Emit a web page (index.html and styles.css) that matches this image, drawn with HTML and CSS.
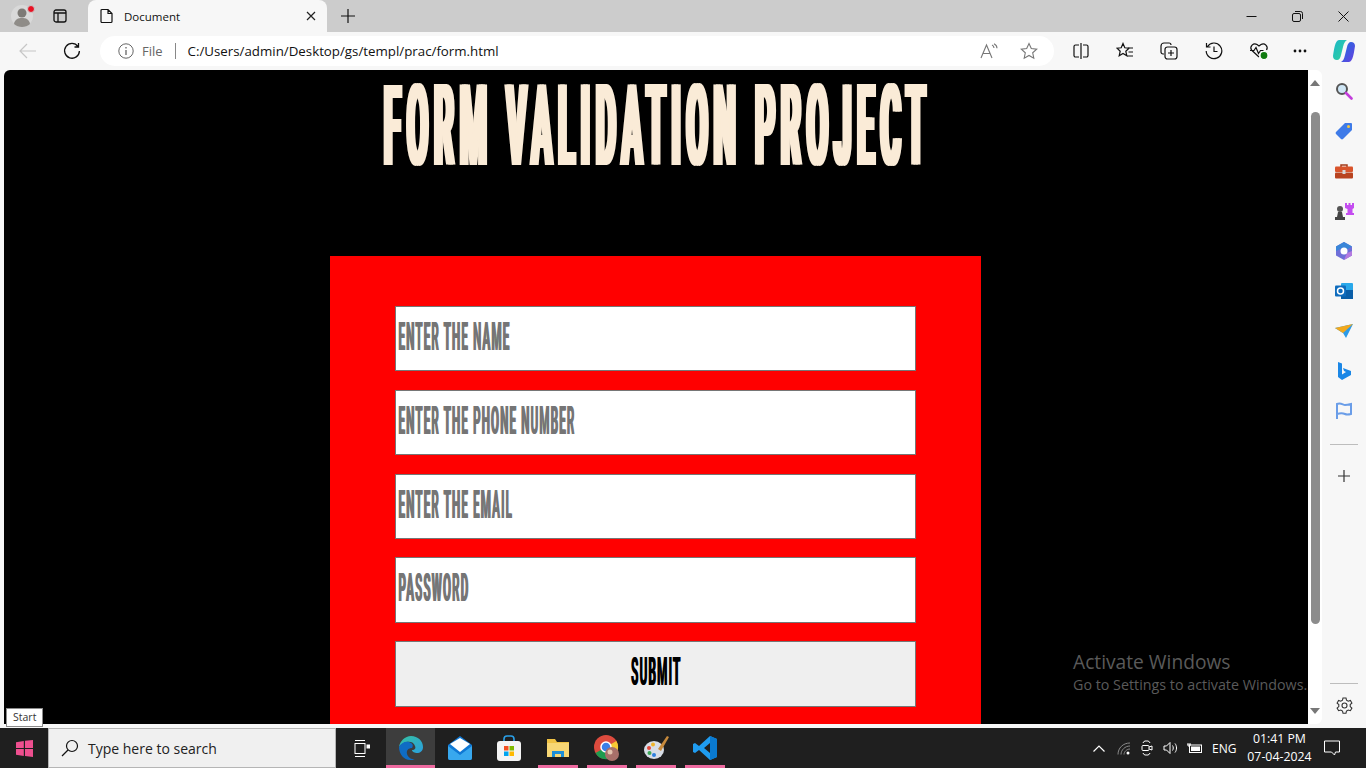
FILE: index.html
```html
<!DOCTYPE html>
<html lang="en">
  <head>
    <meta charset="UTF-8" />
    <meta name="viewport" content="width=device-width, initial-scale=1.0" />
    <title>Document</title>
    <link rel="stylesheet" href="styles.css">
  </head>
  <body>
    <div class="tabbar">
      <div class="profile">
        <svg width="24" height="24" viewBox="0 0 24 24"><circle cx="11" cy="12" r="11" fill="#d9d9d9"/><circle cx="11" cy="9" r="4.5" fill="#7d7a76"/><path d="M3 20c1-5 4-6 8-6s7 1 8 6c-2 2-5 3-8 3s-6-1-8-3z" fill="#8f8c88"/><circle cx="20" cy="5" r="3.5" fill="#e81123" stroke="#ccc"/></svg>
      </div>
      <div class="tabicon">
        <svg width="16" height="16" viewBox="0 0 16 16" fill="none" stroke="#111" stroke-width="1.3"><rect x="2" y="2" width="12" height="12" rx="2"/><path d="M2 5h12M6 5v9"/></svg>
      </div>
      <div class="tab">
        <svg class="tab-doc" width="14" height="16" viewBox="0 0 14 16" fill="none" stroke="#111" stroke-width="1.2"><path d="M2 1.500h6l4 4v8a1 1 0 0 1-1 1H2a1 1 0 0 1-1-1v-11a1 1 0 0 1 1-1zM8 1.500v4h4"/></svg>
        <span class="tab-title">Document</span>
        <svg width="10" height="10" viewBox="0 0 10 10" stroke="#222" stroke-width="1.2"><path d="M1 1l8 8M9 1l-8 8"/></svg>
      </div>
      <div class="newtab">
        <svg width="16" height="16" viewBox="0 0 16 16" stroke="#111" stroke-width="1.2"><path d="M8 1v14M1 8h14"/></svg>
      </div>
      <div class="winctl">
        <button class="winbtn"><svg width="11" height="11" viewBox="0 0 11 11" stroke="#111"><path d="M0.500 5.500h10"/></svg></button>
        <button class="winbtn"><svg width="11" height="11" viewBox="0 0 11 11" fill="none" stroke="#111"><rect x="0.5" y="2.5" width="8" height="8" rx="1.5"/><path d="M3 .5h5.500a2 2 0 0 1 2 2V8"/></svg></button>
        <button class="winbtn"><svg width="11" height="11" viewBox="0 0 11 11" stroke="#111"><path d="M.5.5l10 10M10.500.5l-10 10"/></svg></button>
      </div>
    </div>

    <div class="toolbar">
      <div class="navbtn">
        <svg width="18" height="16" viewBox="0 0 18 16" fill="none" stroke="#c6c6c6" stroke-width="1.2"><path d="M17 8H1M8 1L1 8l7 7"/></svg>
      </div>
      <div class="navbtn">
        <svg width="18" height="18" viewBox="0 0 18 18" fill="none" stroke="#111" stroke-width="1.3"><path d="M15 4.500A7.400 7.400 0 1 0 16.400 9M15.500 1v4h-4"/></svg>
      </div>
      <div class="addressbar">
        <svg class="info" width="16" height="16" viewBox="0 0 16 16" fill="none" stroke="#666"><circle cx="8" cy="8" r="7.2"/><path d="M8 7v5M8 4v1.400" stroke-width="1.3"/></svg>
        <span class="scheme">File</span>
        <span class="addr-sep"></span>
        <span class="url">C:/Users/admin/Desktop/gs/templ/prac/form.html</span>
        <span class="addr-tools">
          <svg width="18" height="16" viewBox="0 0 18 16" fill="none" stroke="#777" stroke-width="1.1"><path d="M1 15L6.500 2 12 15M3 10.500h7M12 2c1.500.7 2 1.800 2 3M14 .8c2 1 3 2.500 3 4.500"/></svg>
          <svg width="18" height="18" viewBox="0 0 18 18" fill="none" stroke="#777" stroke-width="1.1"><path d="M9 1.500l2.300 5 5.400.6-4 3.700 1.100 5.400L9 13.500l-4.800 2.700 1.100-5.400-4-3.700 5.400-.6z"/></svg>
        </span>
      </div>
      <div class="toolicons">
        <svg class="tool" width="16" height="16" viewBox="0 0 16 16" fill="none" stroke="#111" stroke-width="1.2"><path d="M6 2H2.500A1.500 1.500 0 0 0 1 3.500v9A1.500 1.500 0 0 0 2.500 14H6M10 2h3.500A1.500 1.500 0 0 1 15 3.500v9a1.500 1.500 0 0 1-1.500 1.500H10M8 0v16"/></svg>
        <svg class="tool" width="18" height="18" viewBox="0 0 18 18" fill="none" stroke="#111" stroke-width="1.2"><path d="M7 1.500l1.800 4.300 4.200.4-3.200 3 1 4.600L7 11.500l-3.800 2.300 1-4.600-3.200-3 4.200-.4zM12 6h5M12.500 10H17M11 14h6"/></svg>
        <svg class="tool" width="18" height="18" viewBox="0 0 18 18" fill="none" stroke="#111" stroke-width="1.2"><path d="M4 12H3a2 2 0 0 1-2-2V4a3 3 0 0 1 3-3h5a2 2 0 0 1 2 2"/><rect x="5" y="5" width="12" height="12" rx="2.500"/><path d="M11 8v6M8 11h6"/></svg>
        <svg class="tool" width="18" height="18" viewBox="0 0 18 18" fill="none" stroke="#111" stroke-width="1.2"><path d="M2.500 4.500A7.800 7.800 0 1 1 1.200 9M1.500 1v4h4M9 4.500V9.500h3.500"/></svg>
        <svg class="tool tool-health" width="20" height="18" viewBox="0 0 20 18" fill="none" stroke="#111" stroke-width="1.2"><path d="M10 15L2.500 8A4 4 0 0 1 8 2.500l2 1.500 2-1.500A4 4 0 0 1 17.500 8M1 8.500h4l2-3 2.500 6 2-3h3"/><circle cx="15" cy="13.500" r="4" fill="#107c10" stroke="#fff"/></svg>
        <svg class="tool tool-dots" width="14" height="4" viewBox="0 0 14 4" fill="#111"><circle cx="2" cy="2" r="1.400"/><circle cx="7" cy="2" r="1.400"/><circle cx="12" cy="2" r="1.400"/></svg>
        <svg width="24" height="24" viewBox="0 0 24 24"><defs><linearGradient id="cpa" x1="0" y1="0" x2="1" y2="1"><stop offset="0" stop-color="#1bb6c9"/><stop offset="1" stop-color="#34d399"/></linearGradient><linearGradient id="cpb" x1="0" y1="0" x2="1" y2="1"><stop offset="0" stop-color="#1a6fe0"/><stop offset="1" stop-color="#6a3fe0"/></linearGradient></defs><path d="M7 1h8c-2 1-3 3-4 7l-2 8c-.5 3-2 5-4 5-2.500 0-4-1.500-4-4 1-6 2-16 6-16z" fill="url(#cpa)"/><path d="M17 23H9c2-1 3-3 4-7l2-8c.5-3 2-5 4-5 2.500 0 4 1.500 4 4-1 6-2 16-6 16z" fill="url(#cpb)"/></svg>
      </div>
    </div>

    <div class="browser">
      <div class="viewport">
        <h1 class="title"><span class="title-text">FORM VALIDATION PROJECT</span></h1>
        <form class="signup" name="signup" action="">
          <div class="field"><input type="text" name="name" placeholder="ENTER THE NAME" /></div>
          <div class="field"><input type="tel" name="phone" placeholder="ENTER THE PHONE NUMBER" /></div>
          <div class="field"><input type="email" name="email" placeholder="ENTER THE EMAIL" /></div>
          <div class="field"><input type="password" name="password" placeholder="PASSWORD" /></div>
          <button type="button" class="submit"><span class="submit-text">SUBMIT</span></button>
        </form>
        <div class="activate">
          <div class="activate-big">Activate Windows</div>
          <div class="activate-small">Go to Settings to activate Windows.</div>
        </div>
      </div>
      <div class="scrollbar">
        <svg width="10" height="6" viewBox="0 0 10 6" fill="#777"><path d="M5 0l5 6H0z"/></svg>
        <div class="scroll-thumb"></div>
        <svg width="10" height="6" viewBox="0 0 10 6" fill="#777"><path d="M5 6L0 0h10z"/></svg>
      </div>
      <div class="sidebar">
        <div class="side-item"><svg width="18" height="18" viewBox="0 0 18 18" fill="none"><circle cx="7" cy="7" r="5" fill="#cfe6f5" stroke="#555" stroke-width="2"/><path d="M11 11l5.500 5.500" stroke="#c23ddb" stroke-width="2.600" stroke-linecap="round"/></svg></div>
        <div class="side-item"><svg width="18" height="18" viewBox="0 0 18 18"><path d="M10 1h6a1 1 0 0 1 1 1v6l-9 9a1.500 1.500 0 0 1-2 0L1 12a1.500 1.500 0 0 1 0-2z" fill="#3f7be8"/><circle cx="13.500" cy="4.500" r="1.500" fill="#f5c842"/></svg></div>
        <div class="side-item"><svg width="18" height="16" viewBox="0 0 18 16"><path d="M6 4V2h6v2" fill="none" stroke="#a33b1a" stroke-width="1.500"/><rect y="3.500" width="18" height="5.500" rx="1" fill="#d9542b"/><rect y="9.500" width="18" height="6" rx="1" fill="#b8431f"/><rect x="7.500" y="7" width="3" height="4" fill="#d8d8d8"/></svg></div>
        <div class="side-item"><svg width="20" height="18" viewBox="0 0 20 18"><circle cx="6" cy="7" r="3" fill="#555"/><path d="M4 10h4l1 5h2v3H1v-3h2z" fill="#444"/><path d="M11 1h2v2h1.500V1h2v2H18V1h2v5l-1.500 1v4H20v2h-8v-2h1.500V7L11 6z" fill="#c44df0"/></svg></div>
        <div class="side-item"><svg width="18" height="18" viewBox="0 0 18 18"><path d="M9 0l8 4.500v9L9 18l-8-4.500v-9z" fill="#6f6fd8"/><path d="M9 0l8 4.500-5 3L9 5.500 1 9V4.500z" fill="#3a86d8"/><path d="M9 18l8-4.500V9l-5 2z" fill="#b57ae0"/><circle cx="9" cy="9" r="3.500" fill="#fff"/></svg></div>
        <div class="side-item"><svg width="18" height="16" viewBox="0 0 18 16"><rect x="6" width="12" height="15" rx="1" fill="#28a8ea"/><rect x="6" y="7" width="12" height="9" fill="#0a5ea8"/><rect y="2.500" width="11" height="11" rx="1" fill="#0f6cbd"/><circle cx="5.500" cy="8" r="3" fill="none" stroke="#fff" stroke-width="1.500"/></svg></div>
        <div class="side-item"><svg width="18" height="14" viewBox="0 0 18 14"><path d="M0 4l18-4-7 14-3-5z" fill="#2c9be8"/><path d="M0 4l8 5 10-9z" fill="#f2a91e"/></svg></div>
        <div class="side-item"><svg width="14" height="18" viewBox="0 0 14 18"><path d="M1 0l4 1.500v11l4-2.400-2-1-1-3 8 3v4L5 18l-4-3z" fill="#1b87e6"/></svg></div>
        <div class="side-item"><svg width="18" height="18" viewBox="0 0 18 18" fill="none" stroke="#6a9de8" stroke-width="2"><path d="M2 17V2c4-1.500 6 1 8 1s4-.5 6-1v10c-2 .5-4 1-6 0s-5-1-8 0"/></svg></div>
        <div class="side-line"></div>
        <div class="side-item side-plus"><svg width="12" height="12" viewBox="0 0 12 12" stroke="#333" stroke-width="1.200"><path d="M6 0v12M0 6h12"/></svg></div>
        <div class="side-line side-line-low"></div>
        <div class="side-item side-gear"><svg width="17" height="17" viewBox="0 0 17 17" fill="none" stroke="#333" stroke-width="1.100"><circle cx="8.500" cy="8.500" r="2.500"/><path d="M7 1h3l.5 2.200 1.700 1 2.200-.7 1.500 2.600-1.700 1.500v2l1.700 1.500-1.500 2.600-2.200-.7-1.700 1-.5 2.200H7l-.5-2.200-1.700-1-2.200.7L1.100 11.100l1.700-1.500v-2L1.100 6.100l1.500-2.600 2.200.7 1.700-1z"/></svg></div>
      </div>
    </div>

    <div class="tooltip">Start</div>

    <div class="taskbar">
      <div class="start">
        <svg width="17" height="17" viewBox="0 0 17 17" fill="#ee4f8f"><path d="M0 2.200L7.800 1v6.900H0zM9 .8L17 0v7.900H9zM0 9.100h7.800V16L0 14.800zM9 9.100h8V17l-8-1.100z"/></svg>
      </div>
      <div class="search">
        <svg width="18" height="18" viewBox="0 0 18 18" fill="none" stroke="#111" stroke-width="1.200"><circle cx="11" cy="7" r="5.500"/><path d="M7 11l-6 6"/></svg>
        <span class="search-text">Type here to search</span>
      </div>
      <div class="taskicons">
        <div class="task">
          <svg width="16" height="17" viewBox="0 0 16 17" fill="none" stroke="#fff"><path d="M1 .5h10M1 16.500h10"/><rect x="1" y="3.500" width="10" height="10"/><rect x="13" y="5" width="2.500" height="3" fill="#fff"/></svg>
        </div>
        <div class="task task-on">
          <svg width="24" height="24" viewBox="0 0 24 24"><defs><linearGradient id="eda" x1="0" y1="0" x2="1" y2="1"><stop offset="0" stop-color="#35c1a0"/><stop offset="1" stop-color="#2a9fe0"/></linearGradient></defs><path d="M12 0c7 0 12 5 12 11 0 4-3 6-6 6-2 0-5-1-5-3 3 0 4-2 3-4-1-4-5-5-9-4-3 1-6 3-7 5C1 5 6 0 12 0z" fill="url(#eda)"/><path d="M0 11c2-4 6-6 10-5 3 1 5 3 3 6-3 0-6 2-5 6 1 3 4 6 8 5-1 1-3 1-5 1C5 24 0 18 0 11z" fill="#0f6cc4"/></svg>
        </div>
        <div class="task">
          <svg width="26" height="24" viewBox="0 0 26 24"><path d="M13 0L1 9v13a2 2 0 0 0 2 2h20a2 2 0 0 0 2-2V9z" fill="#0f78d4"/><path d="M3 8l10-6 10 6-10 8z" fill="#fff"/><path d="M1 10l12 9 12-9v12a2 2 0 0 1-2 2H3a2 2 0 0 1-2-2z" fill="#38a8ee"/></svg>
        </div>
        <div class="task">
          <svg width="24" height="26" viewBox="0 0 24 26"><path d="M7 7V4a3 3 0 0 1 3-3h4a3 3 0 0 1 3 3v3" fill="none" stroke="#2aa0e8" stroke-width="1.600"/><rect y="6" width="24" height="20" rx="3" fill="#f4f4f4"/><rect x="7" y="11" width="4.500" height="4.500" fill="#f25022"/><rect x="12.500" y="11" width="4.500" height="4.500" fill="#7fba00"/><rect x="7" y="16.500" width="4.500" height="4.500" fill="#00a4ef"/><rect x="12.500" y="16.500" width="4.500" height="4.500" fill="#ffb900"/></svg>
        </div>
        <div class="task task-line">
          <svg width="24" height="22" viewBox="0 0 24 22"><path d="M1 2h8l2 3h12v15H1z" fill="#f0c244"/><rect x="1" y="6" width="22" height="14" fill="#f8d775"/><path d="M6 14h12v6h-3v-3H9v3H6z" fill="#1f8fd8"/></svg>
        </div>
        <div class="task task-line">
          <svg width="26" height="26" viewBox="0 0 26 26"><circle cx="12" cy="12" r="12" fill="#dd4b3e"/><path d="M12 12L1.600 18A12 12 0 0 0 14 24z" fill="#1e9b4f"/><path d="M12 12l10.400-6A12 12 0 0 1 14 24z" fill="#f9c933"/><circle cx="12" cy="12" r="5" fill="#3a7fe8" stroke="#fff" stroke-width="1.500"/><circle cx="18" cy="19" r="7" fill="#a8706a"/><circle cx="16" cy="17" r="2.500" fill="#e2c2ae"/></svg>
        </div>
        <div class="task task-line">
          <svg width="26" height="26" viewBox="0 0 26 26"><ellipse cx="11" cy="15" rx="10" ry="9" fill="#d8dde6"/><circle cx="6" cy="13" r="2" fill="#e2473a"/><circle cx="10" cy="9.500" r="2" fill="#f0b429"/><circle cx="6.500" cy="18" r="2" fill="#3aa655"/><circle cx="11" cy="20" r="2" fill="#2f7fe0"/><path d="M24 1l-9 13 3 2 8-14z" fill="#c78a3c"/></svg>
        </div>
        <div class="task task-line">
          <svg width="24" height="24" viewBox="0 0 24 24"><path d="M17 0l7 3v18l-7 3L6 14l-4 3-2-1V8l2-1 4 3zM17 7l-6 5 6 5z" fill="#1f9cf0"/><path d="M17 0l7 3v18l-7 3z" fill="#0a7ad1"/></svg>
        </div>
      </div>
      <div class="tray">
        <svg width="12" height="7" viewBox="0 0 12 7" fill="none" stroke="#fff" stroke-width="1.200"><path d="M.5 6.500L6 1l5.500 5.500"/></svg>
        <svg class="tray-wifi" width="14" height="13" viewBox="0 0 14 13" fill="none" stroke="#8a8a8a"><path d="M1 12.500C1 6 6 1 13 1M4 12.500C4 8 8 4 13 4M7 12.500C7 10 9.500 7 13 7"/><circle cx="11" cy="11" r="1.500" fill="#fff" stroke="none"/></svg>
        <svg class="tray-cam" width="12" height="16" viewBox="0 0 12 16" fill="none" stroke="#fff"><path d="M2 3a3 3 0 0 1 2-2h3a3 3 0 0 1 2 2M2 13a3 3 0 0 0 2 2h3a3 3 0 0 0 2-2"/><rect x="1" y="5.500" width="7" height="5" rx="1"/><path d="M8 7l3-1v4l-3-1"/></svg>
        <svg class="tray-vol" width="16" height="14" viewBox="0 0 16 14" fill="none" stroke="#fff"><path d="M1 5h2.500L7 1.500v11L3.500 9H1zM9.500 4.500c1 1.500 1 3.500 0 5M12 2.500c2 2.500 2 6.500 0 9"/></svg>
        <svg class="tray-batt" width="16" height="12" viewBox="0 0 16 12" fill="none" stroke="#fff"><rect x="3.500" y="3" width="12" height="7.500"/><rect x="5" y="4.500" width="9" height="4.500" fill="#fff" stroke="none"/><path d="M1 3h4M2 1v2M4 1v2M3 5V3"/></svg>
        <span class="tray-lang">ENG</span>
        <div class="clock">
          <div>01:41 PM</div>
          <div>07-04-2024</div>
        </div>
        <svg class="tray-note" width="16" height="16" viewBox="0 0 16 16" fill="none" stroke="#fff"><path d="M.5 1h15v11h-4l-1 3-3-3H.5z"/></svg>
      </div>
    </div>
  </body>
</html>
```

FILE: styles.css
```css
* {
  box-sizing: border-box;
}
html,
body {
  margin: 0;
  height: 768px;
  overflow: hidden;
}
body {
  position: relative;
  display: flex;
  flex-direction: column;
  font-family: "Open Sans", "Liberation Sans", sans-serif;
  background: #f7f7f7;
  color: #111;
}
svg {
  flex: none;
  display: block;
}

/* tab strip */
.tabbar {
  height: 32px;
  flex: none;
  display: flex;
  align-items: flex-end;
  background: #cccccc;
}
.profile {
  width: 38px;
  height: 32px;
  display: flex;
  align-items: center;
  padding-left: 11px;
}
.tabicon {
  width: 44px;
  height: 32px;
  margin-right: 6px;
  display: flex;
  align-items: center;
  justify-content: center;
}
.tab {
  width: 239px;
  height: 32px;
  display: flex;
  align-items: center;
  padding: 0 11px 0 12px;
  background: #f7f7f7;
  border-radius: 8px 8px 0 0;
}
.tab-title {
  flex: 1;
  margin-left: 10px;
  font-size: 11.500px;
}
.newtab {
  width: 42px;
  height: 32px;
  display: flex;
  align-items: center;
  justify-content: center;
}
.winctl {
  margin-left: auto;
  display: flex;
  height: 32px;
}
.winbtn {
  width: 46px;
  border: none;
  background: none;
  padding: 0;
  display: flex;
  align-items: center;
  justify-content: center;
}

/* address row */
.toolbar {
  height: 38px;
  flex: none;
  display: flex;
  align-items: center;
  background: #f7f7f7;
}
.navbtn {
  width: 44px;
  display: flex;
  justify-content: center;
  margin-left: 6px;
  margin-right: -6px;
}
.addressbar {
  width: 954px;
  height: 30px;
  margin-left: 12px;
  display: flex;
  align-items: center;
  padding: 0 16px 0 18px;
  background: #ffffff;
  border-radius: 15px;
  font-size: 13px;
}
.scheme {
  margin-left: 8px;
  color: #666;
}
.addr-sep {
  width: 1px;
  height: 16px;
  margin: 0 12px;
  background: #888;
}
.url {
  color: #111;
  font-size: 13.300px;
}
.addr-tools {
  margin-left: auto;
  display: flex;
  align-items: center;
  gap: 22px;
}
.toolicons {
  flex: 1;
  display: flex;
  align-items: center;
  padding-left: 19px;
}
.tool {
  margin-right: 26.500px;
}
.tool-health {
  margin-right: 24px;
}
.tool-dots {
  margin-right: 25px;
}

/* page area */
.browser {
  height: 654px;
  flex: none;
  display: flex;
  padding-left: 4px;
}
.viewport {
  position: relative;
  width: 1304px;
  height: 654px;
  overflow: hidden;
  background: #000000;
  border-radius: 6px 0 0 0;
}
.title {
  height: 186px;
  margin: 0;
  padding: 43px 0 0 4px;
  display: flex;
  justify-content: center;
  align-items: flex-start;
  font: 700 40px/30px Roboto, "Liberation Sans", sans-serif;
  color: #faebd7;
}
/* no condensed display font here, so the letters get stretched by hand */
.title-text {
  display: block;
  white-space: nowrap;
  letter-spacing: 8px;
  transform: scale(0.765, 2.82);
  text-shadow: 3px 0 0 #faebd7, -3px 0 0 #faebd7;
}
.signup {
  width: 651px;
  margin-left: 326px;
  padding: 50px 65px;
  display: flex;
  flex-direction: column;
  gap: 18.500px;
  background: #ff0000;
}
.field {
  height: 65.250px;
  flex: none;
  overflow: hidden;
  background: #ffffff;
  border: 1px solid #767676;
}
.field input {
  display: block;
  width: 339%;
  height: 100%;
  padding: 0 0 3px 7px;
  border: none;
  outline: none;
  background: none;
  font: 700 39px Roboto, "Liberation Sans", sans-serif;
  letter-spacing: 4px;
  color: #757575;
  text-shadow: 3px 0 0 #757575;
  transform: scaleX(0.296);
  transform-origin: left center;
}
.submit {
  height: 66px;
  flex: none;
  padding: 0 0 4px;
  overflow: hidden;
  background: #efefef;
  border: 1px solid #767676;
  font: 700 39px Roboto, "Liberation Sans", sans-serif;
  color: #000000;
}
.submit-text {
  display: inline-block;
  letter-spacing: 4px;
  transform: scaleX(0.3);
  text-shadow: 3px 0 0 #000;
}
.activate {
  position: absolute;
  left: 1069px;
  top: 579px;
  white-space: nowrap;
  color: #5a5a5a;
}
.activate-big {
  font-size: 19.200px;
  line-height: 26px;
}
.activate-small {
  font-size: 14.300px;
  line-height: 20px;
}

.scrollbar {
  width: 14px;
  height: 654px;
  display: flex;
  flex-direction: column;
  align-items: center;
  padding-top: 10px;
  background: #ffffff;
  border-radius: 0 6px 6px 0;
}
.scroll-thumb {
  width: 9px;
  height: 512px;
  margin: 26px 0 84px;
  background: #8c8c8c;
  border-radius: 5px;
}
.sidebar {
  flex: 1;
  display: flex;
  flex-direction: column;
  align-items: center;
  padding-top: 1px;
}
.side-item {
  height: 40px;
  flex: none;
  display: flex;
  align-items: center;
  justify-content: center;
}
.side-line {
  width: 28px;
  height: 1px;
  flex: none;
  margin-top: 13px;
  background: #bdbdbd;
}
.side-plus {
  margin-top: 11px;
}
.side-line-low {
  margin-top: 187px;
}
.side-gear {
  height: 38px;
  margin-top: 2px;
}

.tooltip {
  position: absolute;
  left: 6px;
  top: 708px;
  height: 19px;
  padding: 0 6px;
  background: #ffffff;
  border: 1px solid #8a8a8a;
  font-size: 10.500px;
  line-height: 17px;
  color: #333;
}

/* windows taskbar */
.taskbar {
  height: 40px;
  flex: none;
  margin-top: 4px;
  display: flex;
  align-items: center;
  background: #1f1f1f;
  color: #fff;
}
.start {
  width: 48px;
  height: 40px;
  display: flex;
  align-items: center;
  justify-content: center;
}
.search {
  width: 288px;
  height: 40px;
  display: flex;
  align-items: center;
  padding-left: 12px;
  background: #f0f0f0;
  border: 1px solid #b5b5b5;
  color: #222;
}
.search-text {
  margin-left: 9px;
  font-size: 14px;
}
.taskicons {
  display: flex;
  height: 40px;
  margin-left: 1px;
}
.task {
  width: 49px;
  height: 40px;
  display: flex;
  align-items: center;
  justify-content: center;
}
.task-on {
  background: #3d3d3d;
  border-bottom: 3px solid #ee6aa0;
  padding-top: 3px;
}
.task-line {
  width: 40px;
  margin: 0 4.500px;
  border-bottom: 3px solid #ee6aa0;
  padding-top: 3px;
}
.tray {
  flex: 1;
  display: flex;
  align-items: center;
  height: 40px;
  padding-left: 364px;
}
.tray-wifi {
  margin-left: 12px;
}
.tray-cam {
  margin-left: 10px;
}
.tray-vol {
  margin-left: 10px;
}
.tray-batt {
  margin-left: 7px;
}
.tray-lang {
  margin-left: 10px;
  font-size: 12px;
}
.clock {
  width: 70px;
  margin-left: 8px;
  text-align: center;
  font-size: 12.300px;
  line-height: 18px;
}
.tray-note {
  margin-left: 10px;
}
```
